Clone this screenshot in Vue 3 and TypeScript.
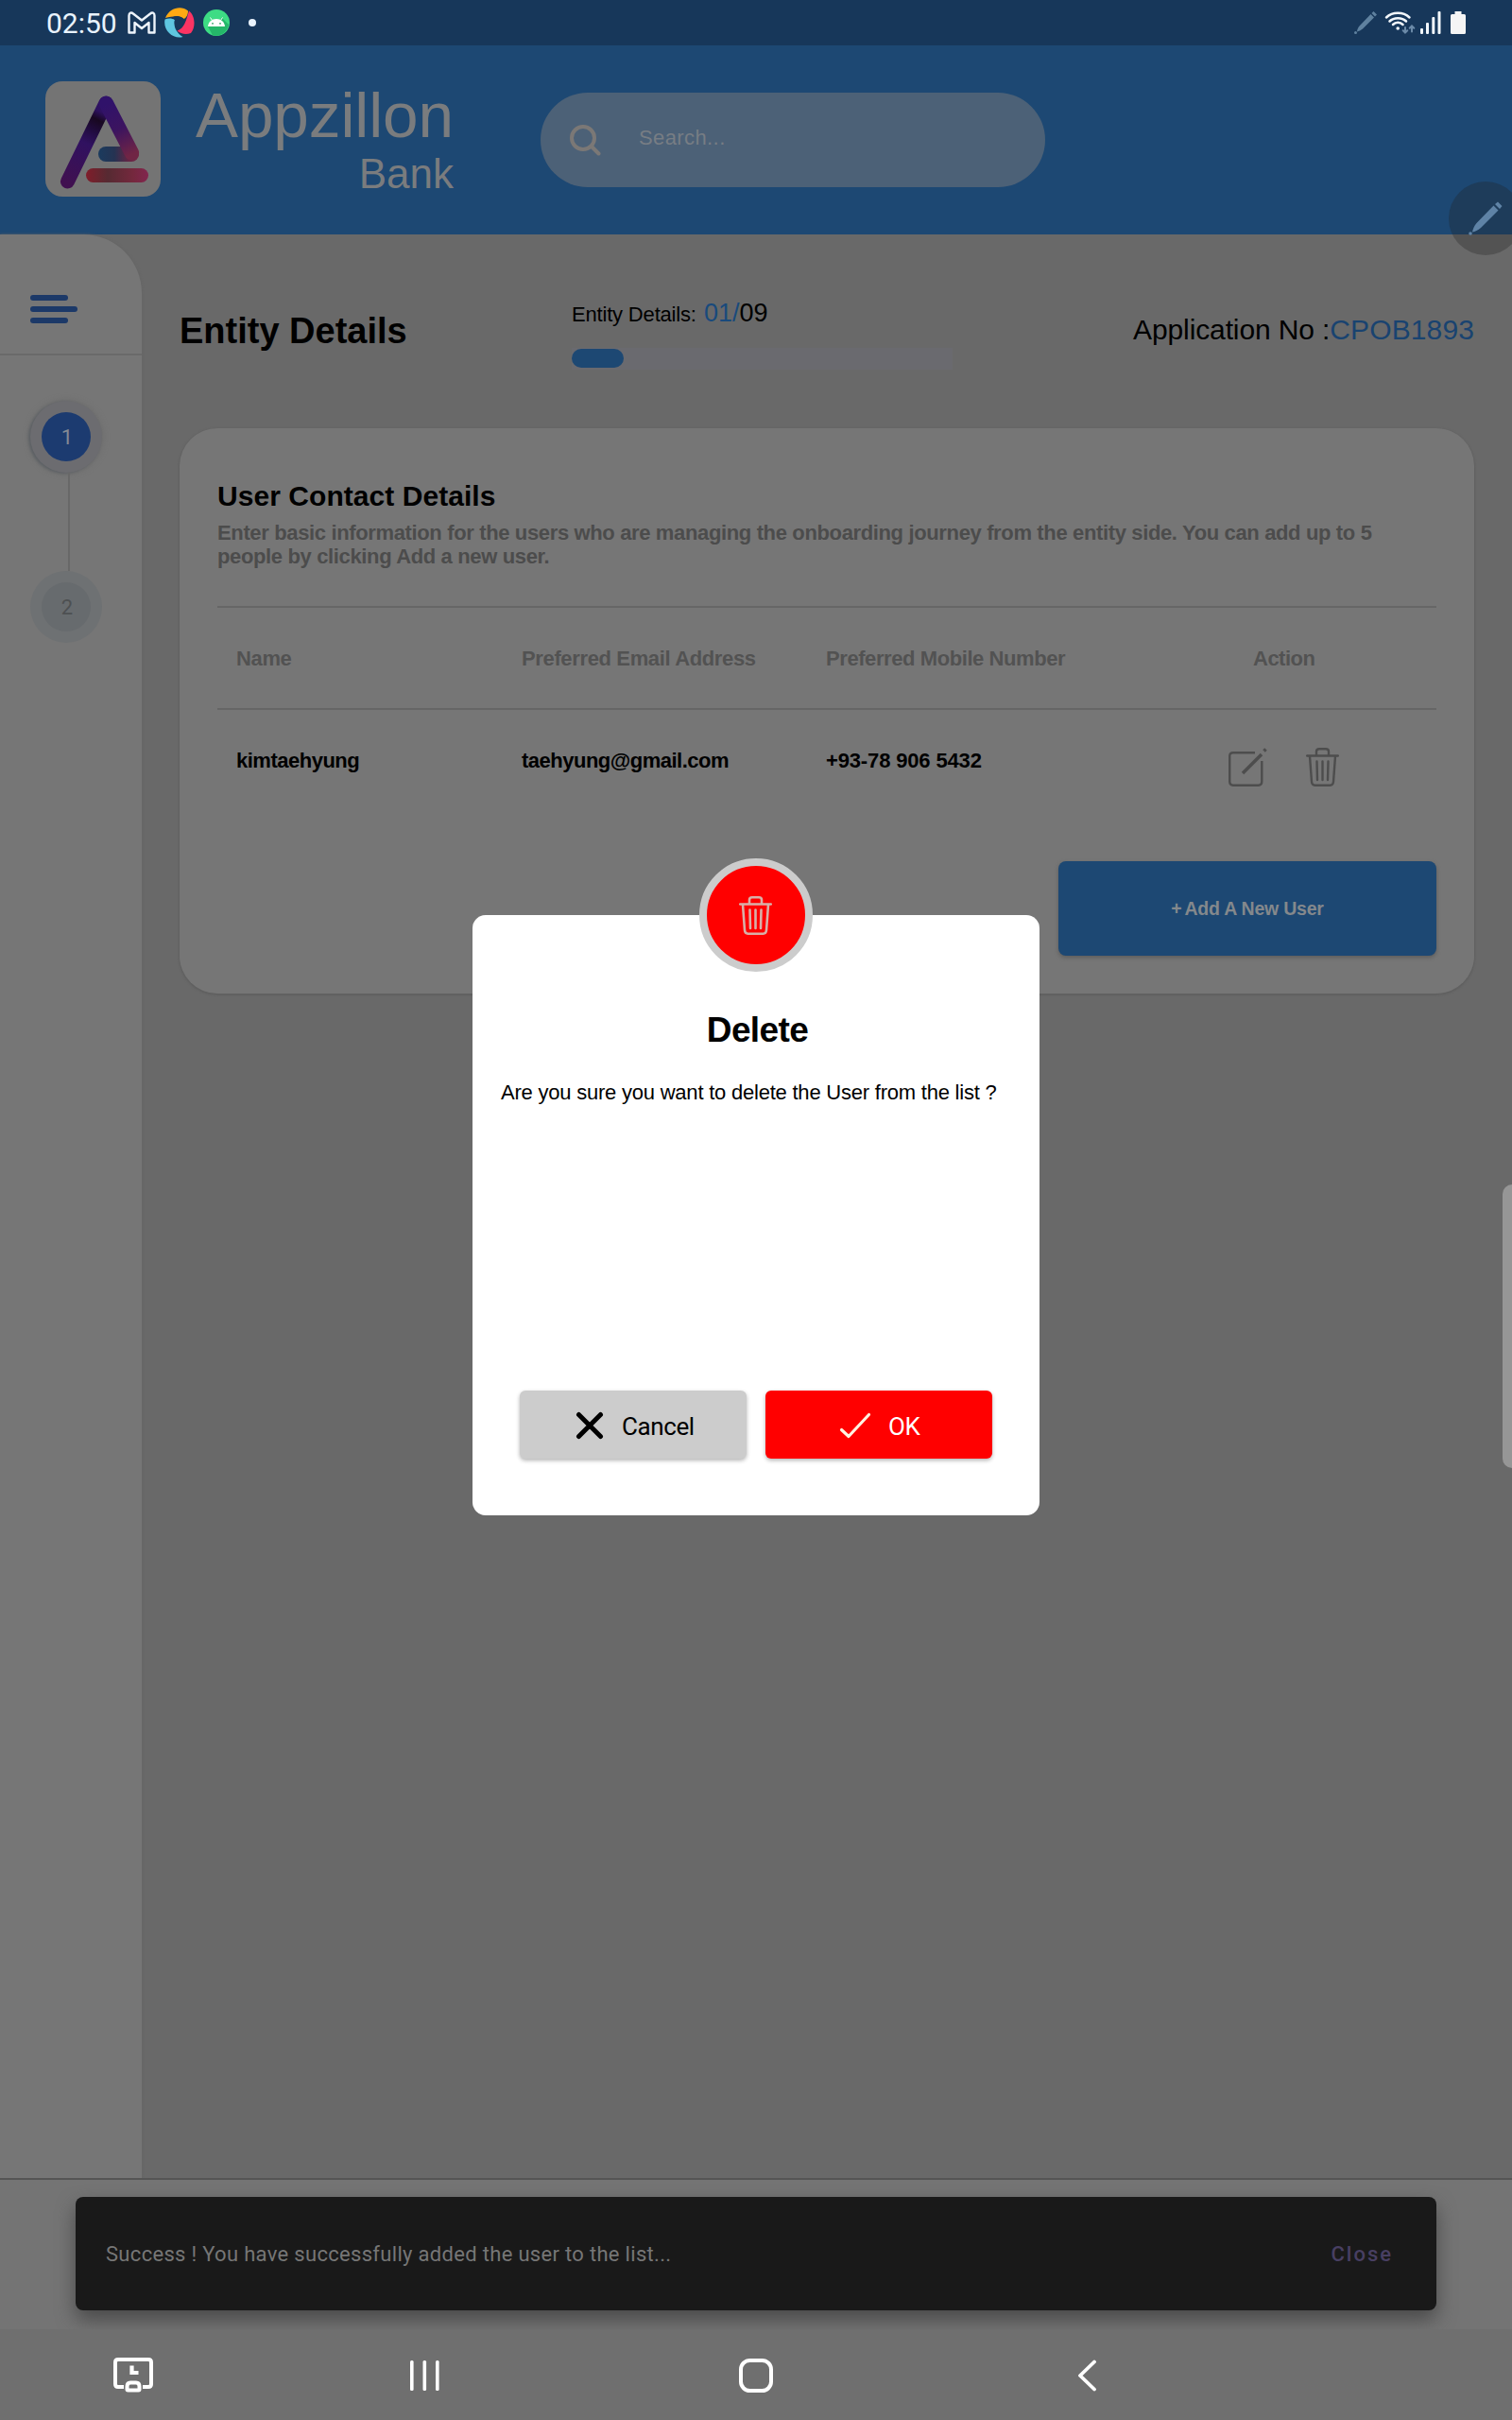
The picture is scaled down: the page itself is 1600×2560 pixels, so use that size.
<script setup lang="ts">
interface Column { key: string; label: string }
interface Contact { name: string; email: string; phone: string }

const columns: Column[] = [
  { key: 'name', label: 'Name' },
  { key: 'email', label: 'Preferred Email Address' },
  { key: 'phone', label: 'Preferred Mobile Number' },
  { key: 'action', label: 'Action' },
]
const contacts: Contact[] = [
  { name: 'kimtaehyung', email: 'taehyung@gmail.com', phone: '+93-78 906 5432' },
]
const steps = [
  { id: 1, active: true },
  { id: 2, active: false },
]
</script>

<template>
  <div class="screen">
    <div class="statusbar">
      <span class="clock">02:50</span>
      <svg class="ic-mail" width="30" height="24" viewBox="0 0 30 24" fill="none" stroke="#eef4fb" stroke-width="2.4" stroke-linejoin="round">
        <path d="M1.500 22.500V4.500C1.500 1.500 4 .8 6 2.500L15 9.500 24 2.500C26 .8 28.500 1.500 28.500 4.500V22.500H22.500V12L15 18 7.500 12V22.500Z" />
      </svg>
      <svg class="ic-swirl" width="32" height="32" viewBox="0 0 32 32">
        <path d="M1 11C5 1 17-3 25 3.500 25 8 23 11 20.500 12 16 8 9 9 1 11Z" fill="#ffa913" />
        <path d="M26 3.500C33 9 33 21 28 27 23 29 17 28 13.500 24.500 21 22 23 14 26 3.500Z" fill="#fb3463" />
        <path d="M.5 12.500C4 11 8 11 11 13 9 20 13 27 19.500 31 10 34-2 25 .5 12.500Z" fill="#5fc6e0" />
        <path d="M8 10.500C13 8 18 9 21 12.500 20.500 17 18 21 15 23.500 11.500 21 10 17 11 13Z" fill="#17375a" />
      </svg>
      <svg class="ic-droid" width="28" height="28" viewBox="0 0 28 28">
        <circle cx="14" cy="14" r="14" fill="#3ddc84" />
        <path d="M5 18 20 9 27 16A14 14 0 0 1 10 27.500Z" fill="#25b769" />
        <path d="M5 18C5.500 13 9 10 14 10S22.500 13 23 18Z" fill="#fff" />
        <path d="M9.500 11.500 7.500 8.500M18.500 11.500 20.500 8.500" stroke="#fff" stroke-width="1" />
        <circle cx="10" cy="14.800" r=".9" fill="#2a9d60" /><circle cx="18" cy="14.800" r=".9" fill="#2a9d60" />
      </svg>
      <i class="dot"></i>
      <div class="sys">
        <svg width="24" height="24" viewBox="0 0 24 24" fill="#5f819f">
          <path d="M17.500 3 21 6.500 9 18.500C7 20 5 21 3 21.500 3 19 4.500 16.500 6 15ZM18.500 2 20.500 0 24 3.500 22 5.500Z" /><circle cx="1.500" cy="22.500" r="1.500" />
        </svg>
        <svg class="wifi" width="34" height="24" viewBox="0 0 34 24" fill="none" stroke="#f2f7fc" stroke-width="2.500" stroke-linecap="round">
          <path d="M2 6.500C8.500.2 20 .2 26.500 6.500M5.500 10.500C10 6 18.500 6 23 10.500M9 14C12 11 16.500 11 19.500 14" />
          <circle cx="14.200" cy="18" r="1.800" fill="#f2f7fc" stroke="none" />
          <path d="M22 17V22.500M19.700 20.300 22 22.500 24.300 20.300M29 21.500V15.500M26.700 17.700 29 15.400 31.300 17.700" stroke="#6b8aa8" stroke-width="2" />
        </svg>
        <svg class="signal" width="23" height="24" viewBox="0 0 23 24" fill="#f2f7fc">
          <rect x="0" y="18" width="3" height="6" rx="1" /><rect x="6" y="12" width="3" height="12" rx="1" /><rect x="12.300" y="6" width="3" height="18" rx="1" /><rect x="18.500" y="0" width="3" height="24" rx="1" />
        </svg>
        <svg class="battery" width="16" height="24" viewBox="0 0 16 24" fill="#f5f5f5"><path d="M4.500 0H11.500V3H14.500Q16 3 16 4.500V22.500Q16 24 14.500 24H1.500Q0 24 0 22.500V4.500Q0 3 1.500 3H4.500Z" /></svg>
      </div>
    </div>

    <header class="header">
      <svg class="logo" width="123" height="122" viewBox="0 0 123 122">
        <defs>
          <linearGradient id="leg" gradientUnits="userSpaceOnUse" x1="23" y1="107" x2="63" y2="24"><stop offset="0" stop-color="#401050" /><stop offset=".5" stop-color="#301160" /><stop offset=".65" stop-color="#220c42" /><stop offset=".8" stop-color="#180820" /><stop offset=".9" stop-color="#2e1160" /></linearGradient>
          <linearGradient id="side" gradientUnits="userSpaceOnUse" x1="65" y1="24" x2="92" y2="77"><stop offset="0" stop-color="#30126a" /><stop offset=".5" stop-color="#3c145f" /><stop offset="1" stop-color="#702545" /></linearGradient>
          <linearGradient id="hook" x1="0" y1="0" x2="1" y2="0"><stop offset="0" stop-color="#1b3b5e" /><stop offset=".4" stop-color="#253352" /><stop offset=".75" stop-color="#652444" /><stop offset="1" stop-color="#702545" /></linearGradient>
          <linearGradient id="bar" x1="0" y1="0" x2="1" y2="0"><stop offset="0" stop-color="#801d2a" /><stop offset=".35" stop-color="#562a32" /><stop offset=".75" stop-color="#74283d" /><stop offset="1" stop-color="#82254f" /></linearGradient>
        </defs>
        <rect width="122" height="122" rx="18" fill="#747474" />
        <path d="M64 23 23.500 106" stroke="url(#leg)" stroke-width="15" stroke-linecap="round" fill="none" />
        <rect x="56" y="69" width="43" height="16" rx="8" fill="url(#hook)" />
        <path d="M64.500 23.500 91.500 76" stroke="url(#side)" stroke-width="15.500" stroke-linecap="round" fill="none" />
        <rect x="43" y="92" width="66" height="15" rx="7.500" fill="url(#bar)" />
      </svg>
      <div class="brand"><span class="brand-name">Appzillon</span><span class="brand-sub">Bank</span></div>
      <div class="search">
        <svg width="33" height="33" viewBox="0 0 33 33" fill="none" stroke="#7b7876" stroke-width="4" stroke-linecap="round"><circle cx="14" cy="14" r="12" /><path d="M23 23 30.500 30.500" /></svg>
        <span>Search...</span>
      </div>
    </header>

    <div class="body">
      <aside class="sidebar">
        <div class="menu"><i></i><i class="long"></i><i></i></div>
        <div class="steps">
          <template v-for="s in steps" :key="s.id">
            <i v-if="s.id > 1" class="link"></i>
            <div class="step" :class="{ active: s.active }"><span>{{ s.id }}</span></div>
          </template>
        </div>
      </aside>

      <main class="main">
        <div class="topline">
          <h1>Entity Details</h1>
          <div class="progress">
            <p><span class="lbl">Entity Details:</span><span class="count"><b>01/</b>09</span></p>
            <div class="track"><i></i></div>
          </div>
          <div class="appno">Application No :<b>CPOB1893</b></div>
        </div>

        <section class="card">
          <h2>User Contact Details</h2>
          <p class="desc">Enter basic information for the users who are managing the onboarding journey from the entity side. You can add up to 5<br />people by clicking Add a new user.</p>
          <div class="row head"><span v-for="c in columns" :key="c.key" :class="'c-' + c.key">{{ c.label }}</span></div>
          <div v-for="c in contacts" :key="c.email" class="row">
            <span class="c-name">{{ c.name }}</span>
            <span class="c-email">{{ c.email }}</span>
            <span class="c-phone">{{ c.phone }}</span>
            <span class="c-action icons">
              <svg width="41" height="41" viewBox="0 0 41 41" fill="none" stroke="#4d4d4d" stroke-width="2.400"><path d="M28 5.200H5Q1.200 5.200 1.200 9V35.500Q1.200 39.700 5 39.700H31.500Q35.300 39.700 35.300 35.500V14" /><path d="M15 27 35 7" stroke-width="3.600" /><path d="M37.500 3.500 39.500 1.500" stroke-width="3.500" /></svg>
              <svg width="35" height="41" viewBox="0 0 35 41" fill="none" stroke="#4d4d4d" stroke-width="2.400" stroke-linecap="round"><path d="M1.200 8.500H33.800M11 8V4Q11 1.200 14 1.200H21Q24 1.200 24 4V8M4 9 6 36Q6.300 39.700 9.500 39.700H25.500Q28.700 39.700 29 36L31 9M11.500 14.500 12 34M17.500 14.500V34M23.500 14.500 23 34" /></svg>
            </span>
          </div>
          <button class="add"><span>+</span>Add A New User</button>
        </section>
      </main>
    </div>

    <footer class="footer">
      <div class="snackbar"><span>Success ! You have successfully added the user to the list...</span><b>Close</b></div>
    </footer>

    <nav class="nav">
      <svg class="n1" width="42" height="38" viewBox="0 0 42 38" fill="none" stroke="#fff" stroke-width="4"><path d="M11 31H5Q2 31 2 28V5Q2 2 5 2H37Q40 2 40 5V28Q40 31 37 31H31" /><path d="M19.500 8.500V16H26.500" stroke-width="4.200" /><path d="M14.500 33.500V30.500Q14.500 26.500 18 26.500H24Q27.500 26.500 27.500 30.500V33.500Q27.500 34.500 26.500 34.500H15.500Q14.500 34.500 14.500 33.500Z" /></svg>
      <svg class="n2" width="32" height="32" viewBox="0 0 32 32" fill="#fff"><rect width="3.600" height="32" rx="1.500" /><rect x="13.500" width="3.600" height="32" rx="1.500" /><rect x="27" width="3.600" height="32" rx="1.500" /></svg>
      <svg class="n3" width="36" height="36" viewBox="0 0 36 36" fill="none" stroke="#fff" stroke-width="4"><rect x="2" y="2" width="32" height="32" rx="9.500" /></svg>
      <svg class="n4" width="22" height="34" viewBox="0 0 22 34" fill="none" stroke="#fff" stroke-width="3.800" stroke-linecap="round" stroke-linejoin="round"><path d="M18 2.500 3 17 18 31.500" /></svg>
    </nav>

    <div class="pen">
      <svg width="36" height="36" viewBox="0 0 36 36" fill="#5f83a6"><path d="M26.500 4.500 31.500 9.500 13 28C10 30.500 7 32 4 32.500 4.500 29.500 6 26 8.500 23ZM28 3 31 .5 35.500 5 33 8Z" /><circle cx="2" cy="34" r="1.800" /></svg>
    </div>
    <div class="edge"></div>

    <div class="dialog">
      <div class="badge">
        <svg width="35" height="41" viewBox="0 0 35 41" fill="none" stroke="#d8b0a8" stroke-width="2.600" stroke-linecap="round"><path d="M1.200 8.500H33.800M11 8V4Q11 1.300 14 1.300H21Q24 1.300 24 4V8M4 9 6 36Q6.300 39.700 9.500 39.700H25.500Q28.700 39.700 29 36L31 9M11.500 14.500 12 34M17.500 14.500V34M23.500 14.500 23 34" /></svg>
      </div>
      <h3>Delete</h3>
      <p>Are you sure you want to delete the User from the list ?</p>
      <div class="actions">
        <button class="cancel"><svg width="30" height="30" viewBox="0 0 30 30" stroke="#000" stroke-width="5" stroke-linecap="round"><path d="M3.500 3.500 26.500 26.500M26.500 3.500 3.500 26.500" /></svg><span>Cancel</span></button>
        <button class="ok"><svg width="34" height="28" viewBox="0 0 34 28" fill="none" stroke="#fff2e0" stroke-width="3.200" stroke-linecap="round" stroke-linejoin="round"><path d="M2.500 18.500 10 25.500 31.500 2.500" /></svg><span>OK</span></button>
      </div>
    </div>
  </div>
</template>

<style>
body { margin: 0; }
</style>

<style scoped>
.screen { position: relative; width: 1600px; height: 2560px; overflow: hidden; display: flex; flex-direction: column; background: #696969; font-family: "Liberation Sans", Arial, sans-serif; color: #000; }
.screen *, .screen *::before { box-sizing: border-box; }
h1, h2, h3, p { margin: 0; white-space: nowrap; }
svg { display: block; flex: none; }
button { border: 0; padding: 0; font-family: inherit; }
.statusbar { height: 48px; background: #17375a; display: flex; align-items: center; padding: 0 49px; flex: none; }
.clock { font: 30px/48px Roboto, sans-serif; color: #e9f3fd; width: 86px; padding-top: 1px; }
.ic-swirl { margin-left: 9px; }
.ic-droid { margin-left: 9px; }
.dot { width: 8px; height: 8px; border-radius: 50%; background: #e9f3fd; margin-left: 20px; }
.sys { margin-left: auto; display: flex; align-items: center; }
.wifi { margin-left: 8px; }
.signal { margin-left: 4px; }
.battery { margin-left: 9px; }

.header { height: 200px; background: #1d4873; flex: none; display: flex; align-items: flex-start; padding-left: 48px; }
.logo { margin-top: 38px; }
.brand { margin: 41px 0 0 34px; width: 275px; display: flex; flex-direction: column; align-items: flex-end; color: #7a7c7e; }
.brand-name { font-size: 67.500px; line-height: 66px; margin-right: 0; letter-spacing: -.1px; }
.brand-sub { font-size: 44px; line-height: 48px; margin-top: 5px; }
.search { margin: 50px 0 0 92px; width: 534px; height: 100px; border-radius: 50px; background: #4c6177; display: flex; align-items: center; padding-left: 31px; color: #777d84; font-size: 22px; line-height: 26px; }
.search span { margin: -5px 0 0 40px; letter-spacing: .4px; }

.body { height: 2056px; flex: none; display: flex; }
.sidebar { width: 150px; background: #767676; border-top-right-radius: 62px; box-shadow: 0 0 3px #636363; }
.menu { height: 128px; padding: 64px 0 0 32px; border-bottom: 2px solid #6a6a6a; display: flex; flex-direction: column; gap: 6px; }
.menu i { width: 40px; height: 6px; border-radius: 3px; background: #1c3968; }
.menu i.long { width: 50px; }
.steps { padding: 48px 0 0 32px; display: flex; flex-direction: column; }
.step { width: 76px; height: 76px; border-radius: 50%; background: #6e7173; display: flex; align-items: center; justify-content: center; }
.step span { width: 52px; height: 52px; border-radius: 50%; background: #676b6e; color: #4d5052; font: 22px/53px Roboto, sans-serif; text-align: center; padding-left: 2px; }
.step.active { background: #6c6c70; box-shadow: -2px 1px 3px #5d6165, 0 0 7px #6a6a6a; }
.step.active span { background: #1c3b70; color: #848a94; }
.link { width: 2px; height: 104px; background: #686868; margin-left: 40px; }

.main { flex: 1; padding: 0 40px; }
.topline { height: 205px; display: flex; align-items: flex-start; }
h1 { font-size: 38px; line-height: 44px; margin-top: 80px; width: 415px; }
.progress { width: 403px; margin-top: 67px; }
.progress p { height: 36px; display: flex; align-items: baseline; line-height: 32px; }
.lbl { font-size: 22px; width: 140px; letter-spacing: -.18px; }
.count { font-size: 27px; }
.progress b { font-weight: 400; color: #194a7c; }
.track { height: 23px; margin-top: 17px; background: #6a6a6f; padding-top: 1px; }
.track i { display: block; width: 55px; height: 20px; border-radius: 10px; background: #1d4873; }
.appno { margin: 84px 0 0 auto; font-size: 30px; line-height: 34px; white-space: nowrap; letter-spacing: -.12px; }
.appno b { font-weight: 400; color: #194370; letter-spacing: .12px; }

.card { position: relative; width: 1370px; height: 598px; border-radius: 40px; background: #767676; box-shadow: 0 1px 2px 1px #606060; padding: 54px 40px 0; display: flex; flex-direction: column; }
h2 { font-size: 30px; line-height: 36px; letter-spacing: .05px; }
.desc { font-size: 22px; line-height: 25px; font-weight: 700; color: #4c4c4c; margin-top: 8px; letter-spacing: -.36px; }
.row { height: 108px; display: flex; align-items: center; font-size: 22px; font-weight: 700; padding-left: 20px; line-height: 26px; letter-spacing: -.5px; }
.row.head { margin-top: 40px; border-top: 2px solid #666; border-bottom: 2px solid #666; height: 110px; color: #525252; letter-spacing: -.36px; padding-top: 1px; }
.c-name { width: 302px; }
.c-email { width: 322px; }
.c-phone { width: 425px; letter-spacing: -.15px; }
.head .c-phone { letter-spacing: -.42px; }
.head .c-action { margin-left: 27px; letter-spacing: -.5px; }
.icons { display: flex; gap: 41px; margin: 12px 0 0 1px; }
.add { align-self: flex-end; width: 400px; height: 100px; margin-top: 52px; border-radius: 8px; background: #1d4873; color: #84888c; font-size: 19.500px; font-weight: 700; letter-spacing: -.22px; box-shadow: 0 2px 4px #5c5c5c; display: flex; align-items: center; justify-content: center; gap: 3px; }

.footer { height: 160px; flex: none; border-top: 2px solid #555; background: #747474; padding: 18px 80px 0; overflow: hidden; }
.snackbar { height: 120px; border-radius: 8px; background: #191919; box-shadow: 0 10px 20px #4a4a4a; display: flex; align-items: center; justify-content: space-between; padding: 2px 46px 0 32px; font: 22px/26px Roboto, sans-serif; color: #767676; }
.snackbar span { letter-spacing: .31px; }
.snackbar b { font-weight: 500; letter-spacing: 2px; color: #483f62; }

.nav { height: 96px; background: #6f6f6f; position: relative; flex: none; display: flex; align-items: center; padding: 1px 0 0 120px; }
.n2 { margin-left: 272px; }
.n3 { margin-left: 316px; }
.n4 { margin-left: 322px; }

.pen { position: absolute; left: 1533px; top: 192px; width: 78px; height: 78px; border-radius: 50%; background: rgba(34, 34, 34, .3); padding: 21px 0 0 21px; }
.edge { position: absolute; right: 0; top: 1253px; width: 10px; height: 300px; border-radius: 10px 0 0 10px; background: #969696; }

.dialog { position: absolute; left: 500px; top: 968px; width: 600px; height: 635px; border-radius: 14px; background: #fff; display: flex; flex-direction: column; align-items: center; }
.badge { width: 120px; height: 120px; margin-top: -60px; border: 8px solid #ccc; border-radius: 50%; background: #f00; display: flex; align-items: center; justify-content: center; flex: none; padding-right: 2px; }
h3 { font-size: 37px; line-height: 44px; margin: 40px 0 0 3px; letter-spacing: -.6px; }
.dialog p { font-size: 22px; line-height: 26px; margin-top: 31px; align-self: flex-start; padding-left: 30px; letter-spacing: -.22px; }
.actions { display: flex; gap: 20px; margin-top: 302px; }
.actions button { width: 240px; height: 72px; border-radius: 6px; display: flex; align-items: center; padding-top: 2px; font: 26px/30px Roboto, sans-serif; color: #000; background: #ccc; box-shadow: 0 2px 4px rgba(0, 0, 0, .3); }
.actions span { letter-spacing: -.4px; padding-top: 2px; }
.actions .cancel { padding-left: 59px; gap: 19px; }
.actions .ok { padding-left: 78px; gap: 18px; background: #f00; color: #fff; }
</style>
